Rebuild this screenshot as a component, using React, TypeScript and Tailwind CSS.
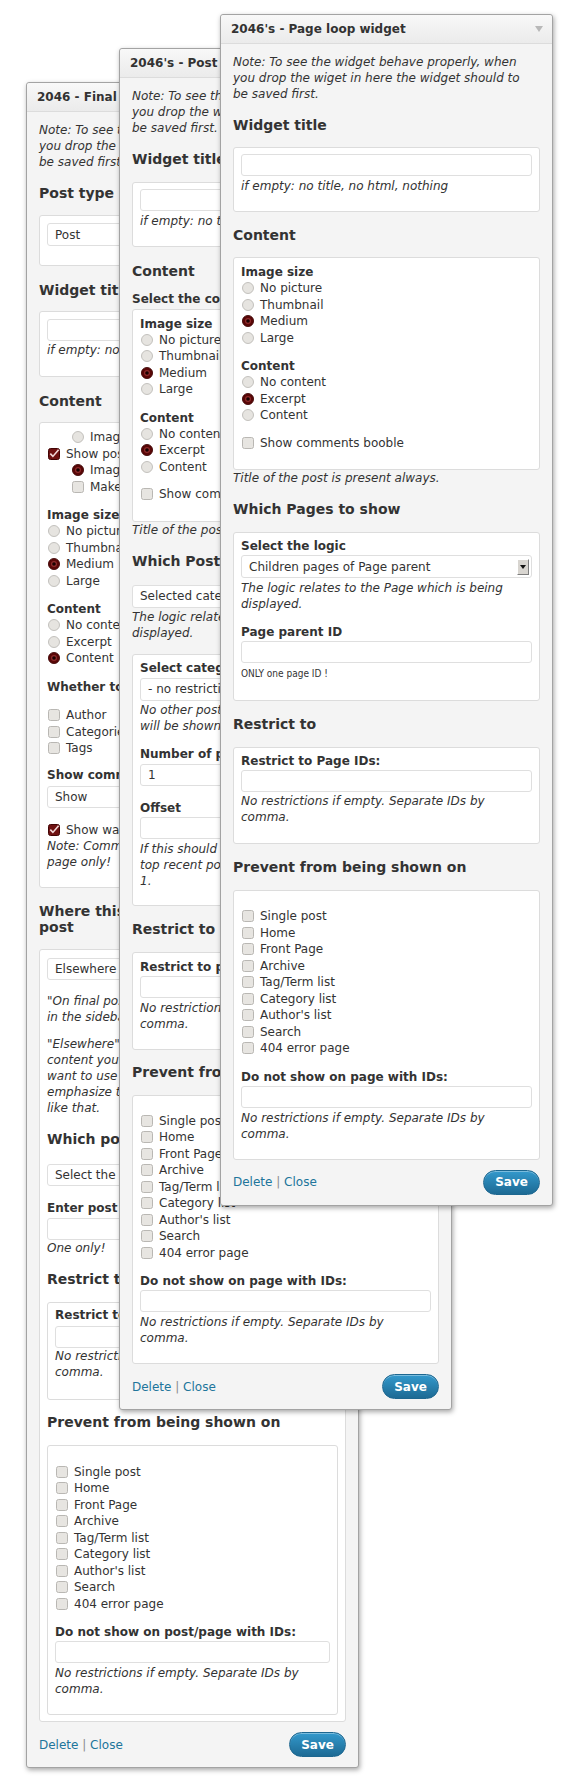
import type { ReactNode } from "react";

type Kids = { children?: ReactNode; className?: string };

const PREVENT = [
  "Single post",
  "Home",
  "Front Page",
  "Archive",
  "Tag/Term list",
  "Category list",
  "Author's list",
  "Search",
  "404 error page",
];

function H3({ children, className = "mt-[15px] mb-[15px]" }: Kids) {
  return (
    <h3 className={`text-[14px] leading-[16px] font-bold text-[#333] whitespace-nowrap ${className}`}>
      {children}
    </h3>
  );
}

function Box({ children, className = "pt-[6px] pb-[17px]" }: Kids) {
  return (
    <div className={`bg-white border border-[#dcdcdc] rounded-[3px] px-[7px] ${className}`}>
      {children}
    </div>
  );
}

function Label({ children, className = "" }: Kids) {
  return <div className={`font-bold leading-[16px] whitespace-nowrap ${className}`}>{children}</div>;
}

function Hint({ children, className = "" }: Kids) {
  return <p className={`italic leading-[16px] whitespace-nowrap ${className}`}>{children}</p>;
}

function Field({ value = "", className = "mt-px" }: { value?: string; className?: string }) {
  return (
    <div
      className={`h-[22px] bg-white border border-[#dfdfdf] rounded-[3px] px-[7px] flex items-center whitespace-nowrap overflow-hidden ${className}`}
    >
      {value}
    </div>
  );
}

function Select({ value, className = "mt-px h-[23px]" }: { value: string; className?: string }) {
  return (
    <div
      className={`bg-white border border-[#dfdfdf] rounded-[3px] pl-[7px] pr-[2px] flex items-center justify-between whitespace-nowrap ${className}`}
    >
      <span>{value}</span>
      <span className="w-[12px] h-[16px] bg-[#d8d5d0] border-t border-l border-t-white border-l-white border-r border-b border-r-[#7d7d7d] border-b-[#7d7d7d] flex items-center justify-center">
        <svg width="6" height="4" viewBox="0 0 6 4">
          <path d="M0 0h6L3 4z" fill="#111" />
        </svg>
      </span>
    </div>
  );
}

function RadioIcon({ checked }: { checked?: boolean }) {
  return checked ? (
    <svg width="12" height="12" viewBox="0 0 12 12" className="shrink-0">
      <circle cx="6" cy="6" r="5.6" fill="#5a0707" stroke="#3b0101" strokeWidth="0.8" />
      <circle cx="6" cy="6" r="3" fill="#8e2b2b" />
      <circle cx="6" cy="6" r="1.8" fill="#1a0000" />
    </svg>
  ) : (
    <svg width="12" height="12" viewBox="0 0 12 12" className="shrink-0">
      <circle cx="6" cy="6" r="5.5" fill="#e6e4e0" stroke="#bdbbb7" strokeWidth="0.9" />
    </svg>
  );
}

function CheckIcon({ checked }: { checked?: boolean }) {
  return checked ? (
    <svg width="12" height="12" viewBox="0 0 12 12" className="shrink-0">
      <rect x="0.5" y="0.5" width="11" height="11" rx="2" fill="#6e1111" stroke="#420404" />
      <path d="M2.3 5.6l2.6 2.8L10.6 1.8" fill="none" stroke="#f2d9d9" strokeWidth="1.6" />
    </svg>
  ) : (
    <svg width="12" height="12" viewBox="0 0 12 12" className="shrink-0">
      <rect x="0.5" y="0.5" width="11" height="11" rx="2" fill="#e7e5e1" stroke="#b9b7b3" />
    </svg>
  );
}

function Opt({
  children,
  radio,
  checked,
  indent,
  className = "",
}: Kids & { radio?: boolean; checked?: boolean; indent?: boolean }) {
  return (
    <div className={`flex items-center h-[16.5px] whitespace-nowrap ${indent ? "pl-[24px]" : ""} ${className}`}>
      <span className="ml-px mr-[6px] flex">
        {radio ? <RadioIcon checked={checked} /> : <CheckIcon checked={checked} />}
      </span>
      <span>{children}</span>
    </div>
  );
}

function Note() {
  return (
    <Hint>
      Note: To see the widget behave properly, when
      <br />
      you drop the wiget in here the widget should to
      <br />
      be saved first.
    </Hint>
  );
}

function ContentBox() {
  return (
    <Box className="pt-[6px] pb-[18px]">
      <Label>Image size</Label>
      <Opt radio>No picture</Opt>
      <Opt radio>Thumbnail</Opt>
      <Opt radio checked>
        Medium
      </Opt>
      <Opt radio>Large</Opt>
      <Label className="mt-[12px]">Content</Label>
      <Opt radio>No content</Opt>
      <Opt radio checked>
        Excerpt
      </Opt>
      <Opt radio>Content</Opt>
      <Opt className="mt-[11px]">Show comments booble</Opt>
    </Box>
  );
}

function PreventBox({ label, className = "pt-[17px] pb-[17px]" }: { label: string; className?: string }) {
  return (
    <Box className={className}>
      {PREVENT.map((p) => (
        <Opt key={p}>{p}</Opt>
      ))}
      <Label className="mt-[12px]">{label}</Label>
      <Field className="mt-px" />
      <Hint className="mt-[2px]">
        No restrictions if empty. Separate IDs by
        <br />
        comma.
      </Hint>
    </Box>
  );
}

function Footer({ className = "mt-[10px]" }: { className?: string }) {
  return (
    <div className={`flex items-center justify-between ${className}`}>
      <div className="text-[#21759b] leading-[16px]">
        Delete <span className="text-[#8a8a8a]">|</span> Close
      </div>
      <div className="h-[25px] w-[57px] rounded-full border border-[#1d6790] bg-gradient-to-b from-[#3399cc] to-[#1d6a94] text-white font-bold flex items-center justify-center shadow-[inset_0_1px_0_rgba(255,255,255,0.35)]">
        Save
      </div>
    </div>
  );
}

function Panel({ title, className, children }: { title: string; className: string; children: ReactNode }) {
  return (
    <div
      className={`absolute w-[333px] border border-[#a3a3a3] rounded-[3px] bg-[#f4f4f4] shadow-[1px_2px_5px_rgba(0,0,0,0.35)] ${className}`}
    >
      <div className="h-[29px] flex items-center justify-between pl-[10px] pr-[9px] bg-gradient-to-b from-[#f8f8f8] to-[#ebebeb] border-b border-[#dcdcdc] rounded-t-[3px]">
        <span className="font-bold whitespace-nowrap">{title}</span>
        <svg width="8" height="6" viewBox="0 0 8 6">
          <path d="M0 0h8L4 6z" fill="#b8b8b8" />
        </svg>
      </div>
      <div className="px-[12px] pt-[10px] pb-[10px]">{children}</div>
    </div>
  );
}

function PanelOne() {
  return (
    <Panel title="2046 - Final post widget" className="left-[26px] top-[82px] z-10">
      <Note />
      <H3 className="mt-[15px] mb-[14px]">Post type</H3>
      <Box className="pt-[7px] pb-[19px]">
        <Select value="Post" className="h-[23px]" />
      </Box>
      <H3 className="mt-[16px] mb-[13px]">Widget title</H3>
      <Box className="pt-[7px] pb-[18px]">
        <Field className="" />
        <Hint className="mt-px">if empty: no title, no html, nothing</Hint>
      </Box>
      <H3 className="mt-[16px] mb-[13px]">Content</H3>
      <Box className="pt-[6px] pb-[17px]">
        <Opt radio indent>
          Image left of the title
        </Opt>
        <Opt checked>Show post title</Opt>
        <Opt radio checked indent>
          Image above the title
        </Opt>
        <Opt indent>Make title a link</Opt>
        <Label className="mt-[12px]">Image size</Label>
        <Opt radio>No picture</Opt>
        <Opt radio>Thumbnail</Opt>
        <Opt radio checked>
          Medium
        </Opt>
        <Opt radio>Large</Opt>
        <Label className="mt-[12px]">Content</Label>
        <Opt radio>No content</Opt>
        <Opt radio>Excerpt</Opt>
        <Opt radio checked>
          Content
        </Opt>
        <Label className="mt-[12px]">Whether to show meta</Label>
        <Opt className="mt-[12.5px]">Author</Opt>
        <Opt>Categories</Opt>
        <Opt>Tags</Opt>
        <Label className="mt-[10.5px]">Show comments</Label>
        <Select value="Show" className="mt-[3px] h-[22px]" />
        <Opt checked className="mt-[13.5px]">
          Show warning when comments closed
        </Opt>
        <Hint>
          Note: Comments are shown on a single post
          <br />
          page only!
        </Hint>
      </Box>
      <H3 className="mt-[15px] mb-[14px]">
        Where this widget is shown on the
        <br />
        post
      </H3>
      <div className="bg-white border border-[#dcdcdc] rounded-[3px] px-[7px] pt-[8px] pb-[5.5px]">
        <Select value="Elsewhere" className="h-[22px]" />
        <Hint className="mt-[13px]">
          "On final post" means the widget is shown
          <br />
          in the sidebar of the final post only.
        </Hint>
        <Hint className="mt-[11px]">
          "Elsewhere" means you choose the post
          <br />
          content you like to show and where you
          <br />
          want to use it, for example to
          <br />
          emphasize the post or something
          <br />
          like that.
        </Hint>
        <H3 className="mt-[15px] mb-[17px]">Which post to show</H3>
        <Select value="Select the post" className="h-[22px]" />
        <Label className="mt-[13.5px]">Enter post ID:</Label>
        <Field className="mt-[2px]" />
        <Hint>One only!</Hint>
        <H3 className="mt-[15px] mb-[15px]">Restrict to</H3>
        <Box className="pt-[4.5px] pb-[18.5px]">
          <Label>Restrict to post IDs:</Label>
          <Field className="mt-[2.5px]" />
          <Hint className="mt-[0.5px]">
            No restrictions if empty. Separate IDs by
            <br />
            comma.
          </Hint>
        </Box>
        <H3 className="mt-[14.5px] mb-[14.5px]">Prevent from being shown on</H3>
        <PreventBox label="Do not show on post/page with IDs:" className="pt-[18px] pb-[17px]" />
      </div>
      <Footer className="mt-[10.5px]" />
    </Panel>
  );
}

function PanelTwo() {
  return (
    <Panel title="2046's - Post loop widget" className="left-[119px] top-[48px] z-20">
      <Note />
      <H3 className="mt-[15px] mb-[14.5px]">Widget title</H3>
      <Box className="pt-[6px] pb-[17px]">
        <Field className="" />
        <Hint className="mt-[2px]">if empty: no title, no html, nothing</Hint>
      </Box>
      <H3 className="mt-[16px] mb-[12px]">Content</H3>
      <Label>Select the content to show</Label>
      <div className="mt-[2px]">
        <ContentBox />
      </div>
      <Hint>Title of the post is present always.</Hint>
      <H3 className="mt-[15px] mb-[16px]">Which Posts to show</H3>
      <Select value="Selected categories posts" className="h-[23px]" />
      <Hint className="mt-px">
        The logic relates to the Post which is being
        <br />
        displayed.
      </Hint>
      <Box className="mt-[13px] pt-[5px] pb-[16px]">
        <Label>Select category:</Label>
        <Select value="- no restrictions -" className="mt-[2px] h-[23px]" />
        <Hint className="mt-px">
          No other posts than from the chosen category
          <br />
          will be shown.
        </Hint>
        <Label className="mt-[12px]">Number of posts</Label>
        <Field value="1" className="mt-[2px]" />
        <Label className="mt-[14px]">Offset</Label>
        <Field className="mt-px" />
        <Hint className="mt-[2px]">
          If this should not show the latest, but one of
          <br />
          top recent posts, set the offset here, e.g.
          <br />
          1.
        </Hint>
      </Box>
      <H3 className="mt-[15px] mb-[15px]">Restrict to</H3>
      <Box className="pt-[6px] pb-[17px]">
        <Label>Restrict to post IDs:</Label>
        <Field className="mt-px" />
        <Hint className="mt-[2px]">
          No restrictions if empty. Separate IDs by
          <br />
          comma.
        </Hint>
      </Box>
      <H3 className="mt-[14px] mb-[15px]">Prevent from being shown on</H3>
      <PreventBox label="Do not show on page with IDs:" />
      <Footer />
    </Panel>
  );
}

function PanelThree() {
  return (
    <Panel title="2046's - Page loop widget" className="left-[220px] top-[14px] z-30">
      <Note />
      <H3 className="mt-[15px] mb-[14px]">Widget title</H3>
      <Box className="pt-[6px] pb-[17px]">
        <Field className="" />
        <Hint className="mt-[2px]">if empty: no title, no html, nothing</Hint>
      </Box>
      <H3 className="mt-[15px] mb-[14px]">Content</H3>
      <ContentBox />
      <Hint>Title of the post is present always.</Hint>
      <H3 className="mt-[15px] mb-[15px]">Which Pages to show</H3>
      <Box className="pt-[5px] pb-[19px]">
        <Label>Select the logic</Label>
        <Select value="Children pages of Page parent" className="mt-px h-[23px]" />
        <Hint className="mt-[2px]">
          The logic relates to the Page which is being
          <br />
          displayed.
        </Hint>
        <Label className="mt-[12px]">Page parent ID</Label>
        <Field className="mt-px" />
        <p className="mt-[4px] text-[10px] leading-[14px] font-['DejaVu_Sans_Condensed','DejaVu_Sans',sans-serif]">
          ONLY one page ID !
        </p>
      </Box>
      <H3 className="mt-[15px] mb-[15px]">Restrict to</H3>
      <Box className="pt-[5px] pb-[18px]">
        <Label>Restrict to Page IDs:</Label>
        <Field className="mt-px" />
        <Hint className="mt-px">
          No restrictions if empty. Separate IDs by
          <br />
          comma.
        </Hint>
      </Box>
      <H3 className="mt-[15px] mb-[15px]">Prevent from being shown on</H3>
      <PreventBox label="Do not show on page with IDs:" />
      <Footer />
    </Panel>
  );
}

export default function App() {
  return (
    <div className="relative w-[576px] h-[1785px] bg-white overflow-hidden text-[12px] leading-[16px] text-[#333] font-['DejaVu_Sans','Liberation_Sans',sans-serif]">
      <PanelOne />
      <PanelTwo />
      <PanelThree />
    </div>
  );
}
